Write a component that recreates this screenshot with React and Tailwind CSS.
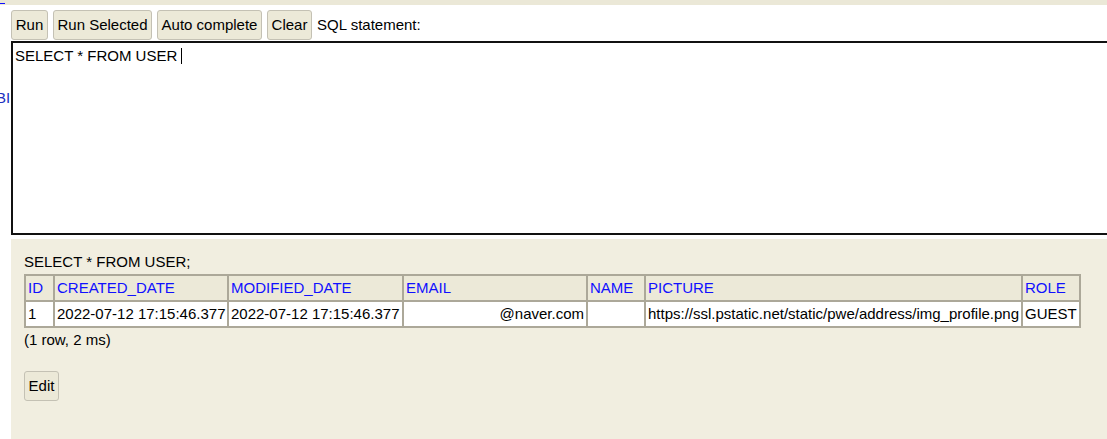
export default function App() {
  const btn =
    "h-[30px] px-0 bg-[#ece9d8] border border-[#c4c1b4] rounded-[3px] text-[15px] leading-[18px] text-black text-center";
  const th = "px-[2px] py-[3px] border border-[#aca899] bg-[#ece9d8] text-left font-normal text-[#1010ff] whitespace-nowrap";
  const td = "px-[2px] py-[3px] border border-[#aca899] bg-white whitespace-nowrap";
  return (
    <div
      className="w-[1107px] h-[439px] overflow-hidden bg-white text-[15px] text-black"
      style={{ fontFamily: '"Liberation Sans", Arial, sans-serif' }}
    >
      <div className="h-[5px] bg-[#ebe8d7] relative">
        <div className="absolute left-0 top-[3px] w-[5px] h-[1px] bg-[#1010ff]" />
      </div>
      <div className="flex">
        <div className="w-[11px] shrink-0 overflow-hidden">
          <div className="mt-[84px] -ml-[4px] text-[#2030c0] leading-[17px]">BI</div>
        </div>
        <div className="flex-1 min-w-0">
          <div className="flex items-center gap-[5px] mt-[5px]">
            <button className={btn + " w-[37px]"}>Run</button>
            <button className={btn + " w-[99px]"}>Run Selected</button>
            <button className={btn + " w-[105px]"}>Auto complete</button>
            <button className={btn + " w-[45px]"}>Clear</button>
            <span className="leading-[18px]">SQL statement:</span>
          </div>
          <div className="mt-[1px] w-[1110px] h-[194px] border-2 border-[#111] px-[2px] pt-[4px] leading-[18px]">
            SELECT * FROM USER{" "}
            <span className="inline-block w-[1px] h-[16px] bg-black align-[-3px]" />
          </div>
          <div className="mt-[4px] h-[300px] bg-[#f1eee0] pl-[13px] pt-[14px]">
            <div className="leading-[18px] mb-[3px]">SELECT * FROM USER;</div>
            <table className="border-separate border-spacing-0 border border-[#aca899] table-fixed w-[1057px] leading-[18px]">
              <colgroup>
                <col className="w-[29px]" />
                <col className="w-[174px]" />
                <col className="w-[175px]" />
                <col className="w-[184px]" />
                <col className="w-[58px]" />
                <col className="w-[377px]" />
                <col />
              </colgroup>
              <thead>
                <tr>
                  <th className={th}>ID</th>
                  <th className={th}>CREATED_DATE</th>
                  <th className={th}>MODIFIED_DATE</th>
                  <th className={th}>EMAIL</th>
                  <th className={th}>NAME</th>
                  <th className={th}>PICTURE</th>
                  <th className={th}>ROLE</th>
                </tr>
              </thead>
              <tbody>
                <tr>
                  <td className={td}>1</td>
                  <td className={td}>2022-07-12 17:15:46.377</td>
                  <td className={td}>2022-07-12 17:15:46.377</td>
                  <td className={td + " text-right"}>@naver.com</td>
                  <td className={td}></td>
                  <td className={td}>https://ssl.pstatic.net/static/pwe/address/img_profile.png</td>
                  <td className={td}>GUEST</td>
                </tr>
              </tbody>
            </table>
            <div className="leading-[18px] mt-[3px]">(1 row, 2 ms)</div>
            <button className={btn + " w-[35px] mt-[22px]"}>Edit</button>
          </div>
        </div>
      </div>
    </div>
  );
}
